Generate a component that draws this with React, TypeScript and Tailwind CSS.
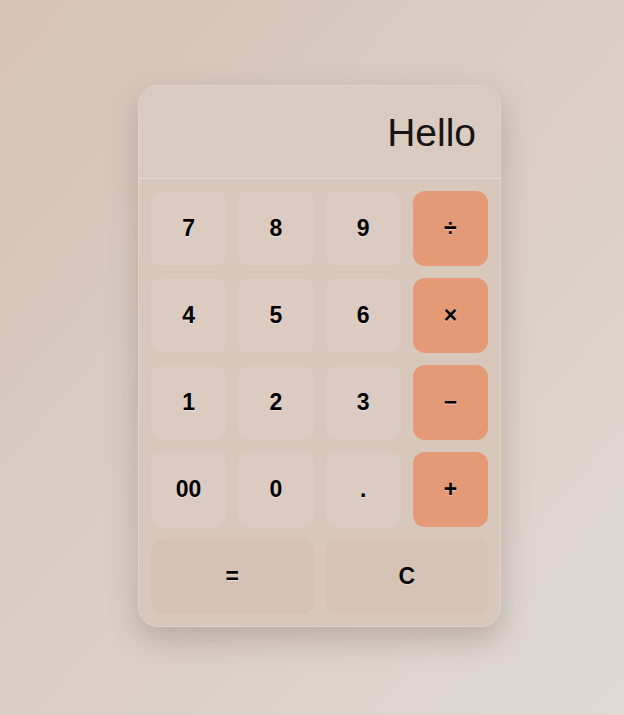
import React, { useState } from 'react';

const KEYS: { label: string; op?: boolean }[] = [
  { label: '7' }, { label: '8' }, { label: '9' }, { label: '÷', op: true },
  { label: '4' }, { label: '5' }, { label: '6' }, { label: '×', op: true },
  { label: '1' }, { label: '2' }, { label: '3' }, { label: '−', op: true },
  { label: '00' }, { label: '0' }, { label: '.' }, { label: '+', op: true },
];

export default function App() {
  const [display] = useState('Hello');

  return (
    <div className="min-h-screen w-full bg-gradient-to-br from-[#d6c3b5] to-[#dfd9d5] flex justify-center pt-[85px] pl-[15px] font-['Liberation_Sans',Arial,sans-serif]">
      <div className="w-[363px] h-fit rounded-[20px] border border-[#e0d4cb] bg-[#d8c7bb] shadow-[0_12px_30px_rgba(120,100,85,0.35)] overflow-hidden flex flex-col">
        {/* Display */}
        <div className="h-[93px] shrink-0 bg-[#dacbc0] border-b border-[#e6dcd4] flex items-center justify-end px-6">
          <span className="text-[39px] leading-none text-[#161412]">{display}</span>
        </div>

        {/* Keypad */}
        <div className="grid grid-cols-4 gap-3 p-3">
          {KEYS.map((k) => (
            <button
              key={k.label}
              className={`h-[75px] rounded-xl flex items-center justify-center text-[23px] font-bold text-black [text-shadow:0_1px_1px_rgba(255,255,255,0.45)] ${
                k.op ? 'bg-[#e49a76]' : 'bg-[#dccbc0]'
              }`}
            >
              {k.label}
            </button>
          ))}
          <button className="col-span-2 h-[75px] rounded-xl bg-[#d5c2b4] flex items-center justify-center text-[23px] font-bold text-black [text-shadow:0_1px_1px_rgba(255,255,255,0.45)]">
            =
          </button>
          <button className="col-span-2 h-[75px] rounded-xl bg-[#d6c3b5] flex items-center justify-center text-[23px] font-bold text-black [text-shadow:0_1px_1px_rgba(255,255,255,0.45)]">
            C
          </button>
        </div>
      </div>
    </div>
  );
}
